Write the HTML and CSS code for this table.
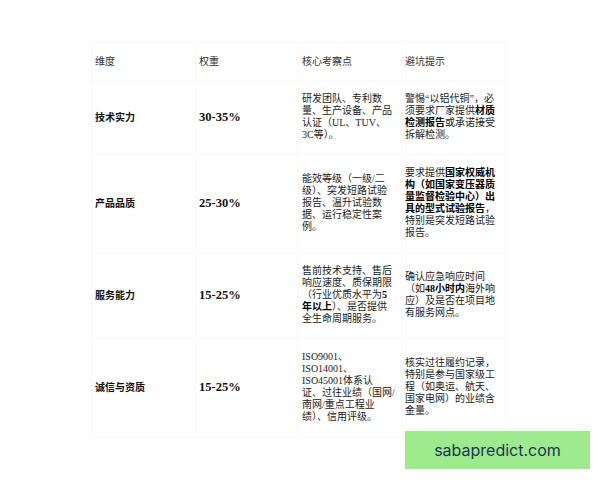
FILE: index.html
```html
<!DOCTYPE html>
<html lang="zh-CN">
<head>
<meta charset="utf-8">
<link rel="stylesheet" href="styles.css">
</head>
<body>
<div class="page">
  <table class="grid">
    <colgroup>
      <col class="c1"><col class="c2"><col class="c3"><col class="c4">
    </colgroup>
    <thead>
      <tr><th>维度</th><th>权重</th><th>核心考察点</th><th>避坑提示</th></tr>
    </thead>
    <tbody>
      <tr>
        <td class="dim">技术实力</td>
        <td class="wt">30-35%</td>
        <td class="txt">研发团队、专利数<br>量、生产设备、产品<br>认证（UL、TUV、<br>3C等）。</td>
        <td class="txt">警惕“以铝代铜”，必<br>须要求厂家提供<b>材质</b><br><b>检测报告</b>或承诺接受<br>拆解检测。</td>
      </tr>
      <tr>
        <td class="dim">产品品质</td>
        <td class="wt">25-30%</td>
        <td class="txt">能效等级（一级/二<br>级）、突发短路试验<br>报告、温升试验数<br>据、运行稳定性案<br>例。</td>
        <td class="txt">要求提供<b>国家权威机</b><br><b>构（如国家变压器质</b><br><b>量监督检验中心）出</b><br><b>具的型式试验报告</b>，<br>特别是突发短路试验<br>报告。</td>
      </tr>
      <tr>
        <td class="dim">服务能力</td>
        <td class="wt">15-25%</td>
        <td class="txt">售前技术支持、售后<br>响应速度、质保期限<br>（行业优质水平为<b>5</b><br><b>年以上</b>）、是否提供<br>全生命周期服务。</td>
        <td class="txt">确认应急响应时间<br>（如<b>48小时内</b>海外响<br>应）及是否在项目地<br>有服务网点。</td>
      </tr>
      <tr>
        <td class="dim">诚信与资质</td>
        <td class="wt">15-25%</td>
        <td class="txt">ISO9001、<br>ISO14001、<br>ISO45001体系认<br>证、过往业绩（国网/<br>南网/重点工程业<br>绩）、信用评级。</td>
        <td class="txt">核实过往履约记录，<br>特别是参与国家级工<br>程（如奥运、航天、<br>国家电网）的业绩含<br>金量。</td>
      </tr>
    </tbody>
  </table>
  <div class="badge">sabapredict.com</div>
</div>
</body>
</html>
```
FILE: styles.css
```css
html, body {
  margin: 0;
  padding: 0;
  background: #ffffff;
}
.page {
  position: relative;
  width: 600px;
  height: 480px;
  padding: 42px 0 0 91px;
  box-sizing: border-box;
  font-family: "Liberation Serif", "Noto Sans CJK SC", serif;
  color: #222222;
}
.grid {
  border-collapse: collapse;
  table-layout: fixed;
  width: 415px;
}
.c1 { width: 104px; }
.c2 { width: 103px; }
.c3 { width: 103px; }
.c4 { width: 105px; }
.grid th,
.grid td {
  border: 1px solid #f9f9f9;
  padding: 12px 2px 13px 3px;
  text-align: left;
  vertical-align: middle;
  font-size: 10px;
  line-height: 12px;
  white-space: nowrap;
}
.grid th {
  font-family: "Noto Sans CJK SC", sans-serif;
  font-weight: normal;
  color: #333333;
}
.dim {
  font-family: "Noto Sans CJK SC", sans-serif;
  font-weight: bold;
  color: #111111;
}
.wt {
  font-weight: bold;
  font-size: 12.5px !important;
  color: #111111;
}
.txt {
  color: #222222;
}
.txt b {
  color: #000000;
}
.badge {
  position: absolute;
  left: 405px;
  top: 431px;
  width: 185px;
  height: 38px;
  background: #9deb8c;
  color: #1e3557;
  font-family: Inter, "Liberation Sans", sans-serif;
  font-size: 16px;
  display: flex;
  align-items: center;
  justify-content: center;
}
```
